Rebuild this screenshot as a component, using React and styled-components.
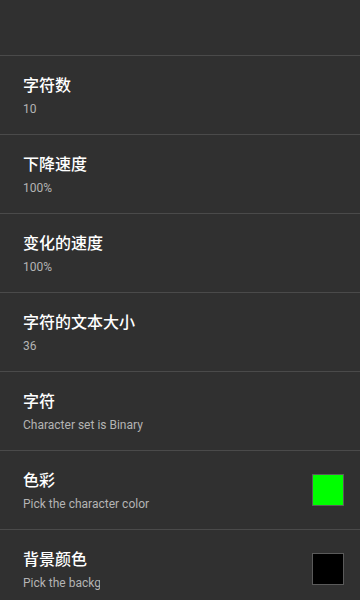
import React from "react";
import styled, { createGlobalStyle } from "styled-components";

const items = [
  { title: "字符数", summary: "10" },
  { title: "下降速度", summary: "100%" },
  { title: "变化的速度", summary: "100%" },
  { title: "字符的文本大小", summary: "36" },
  { title: "字符", summary: "Character set is Binary" },
  { title: "色彩", summary: "Pick the character color", swatch: "#00ff00" },
  { title: "背景颜色", summary: "Pick the background color", swatch: "#000000", clip: true },
];

function App() {
  return (
    <>
      <GlobalStyle />
      <Screen>
        <Header />
        {items.map((item) => (
          <Row key={item.title}>
            <TextBox>
              <Title>{item.title}</Title>
              <Summary $clip={item.clip}>{item.summary}</Summary>
            </TextBox>
            {item.swatch && <Swatch $color={item.swatch} />}
          </Row>
        ))}
      </Screen>
    </>
  );
}

const GlobalStyle = createGlobalStyle`
  body {
    margin: 0;
    background: #303030;
    font-family: Roboto, "Noto Sans CJK SC", sans-serif;
  }
`;

// 화면
const Screen = styled.div`
  width: 360px;
  height: 600px;
  overflow: hidden;
  background: #303030;
`;

// 상단 빈 영역
const Header = styled.div`
  height: 55px;
  border-bottom: 1px solid #4a4a4a;
`;

// 설정 행
const Row = styled.div`
  height: 78px;
  border-bottom: 1px solid #4a4a4a;
  display: flex;
  align-items: center;
  padding: 2px 16px 0 23px;
  box-sizing: border-box;
  height: 79px;
`;

const TextBox = styled.div`
  flex: 1;
  display: flex;
  flex-direction: column;
  gap: 4px;
  min-width: 0;
`;

const Title = styled.div`
  font-size: 16px;
  line-height: 22px;
  font-weight: 500;
  color: #ffffff;
  font-family: Roboto, "Noto Sans CJK SC", sans-serif;
`;

const Summary = styled.div`
  font-size: 12px;
  line-height: 16px;
  color: #b4b4b4;
  white-space: nowrap;
  overflow: hidden;
  width: ${(p) => (p.$clip ? "77px" : "auto")};
`;

const Swatch = styled.div`
  width: 30px;
  height: 30px;
  background: ${(p) => p.$color};
  border: 1px solid #5a5a5a;
  flex-shrink: 0;
  margin-top: -2px;
`;

export default App;
